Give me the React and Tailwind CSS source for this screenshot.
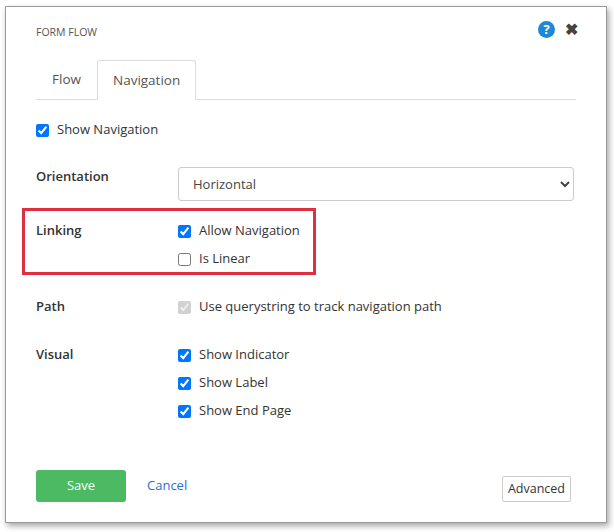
export default function App() {
  const font = { fontFamily: '"Open Sans", sans-serif' };
  const Cb = ({ checked, disabled, label }) => (
    <label className="flex items-center gap-[8px] text-[13px] text-[#333] h-[20px]">
      <input type="checkbox" defaultChecked={checked} disabled={disabled} className="w-[13px] h-[13px] m-0 accent-[#0075ff]" />
      <span>{label}</span>
    </label>
  );
  return (
    <div className="w-[614px] h-[532px] bg-white relative" style={font}>
      <div className="absolute left-[5px] top-[6px] w-[602px] h-[517px] border border-[#999] bg-white shadow-[2px_3px_6px_rgba(0,0,0,0.35)] px-[30px] pt-[18px] flex flex-col">
        <div className="flex items-center justify-between h-[16px] -translate-y-[7px]">
          <span className="text-[10.5px] text-[#555] mt-[14px]">FORM FLOW</span>
          <div className="flex items-center gap-[10px] mr-[-2px] mt-[6px]">
            <span className="w-[17px] h-[17px] rounded-full bg-[#1e88d6] text-white text-[13px] font-bold flex items-center justify-center leading-none">?</span>
            <span className="text-[16px] font-bold text-[#444] leading-none">✖</span>
          </div>
        </div>
        <div className="flex border-b border-[#ddd] mt-[19px] h-[40px] items-end">
          <div className="px-[16px] h-[39px] flex items-center text-[13.5px] text-[#555]">Flow</div>
          <div className="px-[15px] h-[40px] -mb-px flex items-center text-[13.5px] text-[#555] border border-[#ddd] border-b-white bg-white rounded-t-[3px]">Navigation</div>
        </div>
        <div className="mt-[20px]"><Cb checked label="Show Navigation" /></div>
        <div className="flex mt-[27px]">
          <div className="w-[142px] text-[13px] font-semibold text-[#333]">Orientation</div>
          <select className="w-[396px] h-[34px] border border-[#ccc] rounded-[3px] px-[10px] text-[13px] text-[#444] bg-white">
            <option>Horizontal</option>
          </select>
        </div>
        <div className="flex mt-[7px] ml-[-14px] w-[294px] h-[67px] border-[3px] border-[#e0303f] pl-[11px] pt-[10px]">
          <div className="w-[142px] text-[13px] font-semibold text-[#333]">Linking</div>
          <div className="flex flex-col gap-[8px]">
            <Cb checked label="Allow Navigation" />
            <Cb label="Is Linear" />
          </div>
        </div>
        <div className="flex mt-[22px]">
          <div className="w-[142px] text-[13px] font-semibold text-[#333]">Path</div>
          <Cb checked disabled label="Use querystring to track navigation path" />
        </div>
        <div className="flex mt-[28px]">
          <div className="w-[142px] text-[13px] font-semibold text-[#333]">Visual</div>
          <div className="flex flex-col gap-[8px]">
            <Cb checked label="Show Indicator" />
            <Cb checked label="Show Label" />
            <Cb checked label="Show End Page" />
          </div>
        </div>
        <div className="flex items-center mt-[49px]">
          <button className="w-[90px] h-[32px] rounded-[3px] bg-[#4cb963] text-white text-[13px]">Save</button>
          <span className="ml-[21px] text-[13px] text-[#2a6fc9]">Cancel</span>
          <button className="ml-auto mr-[5px] mt-[6px] h-[26px] px-[5px] border border-[#ccc] rounded-[2px] text-[12.5px] text-[#333]">Advanced</button>
        </div>
      </div>
    </div>
  );
}
